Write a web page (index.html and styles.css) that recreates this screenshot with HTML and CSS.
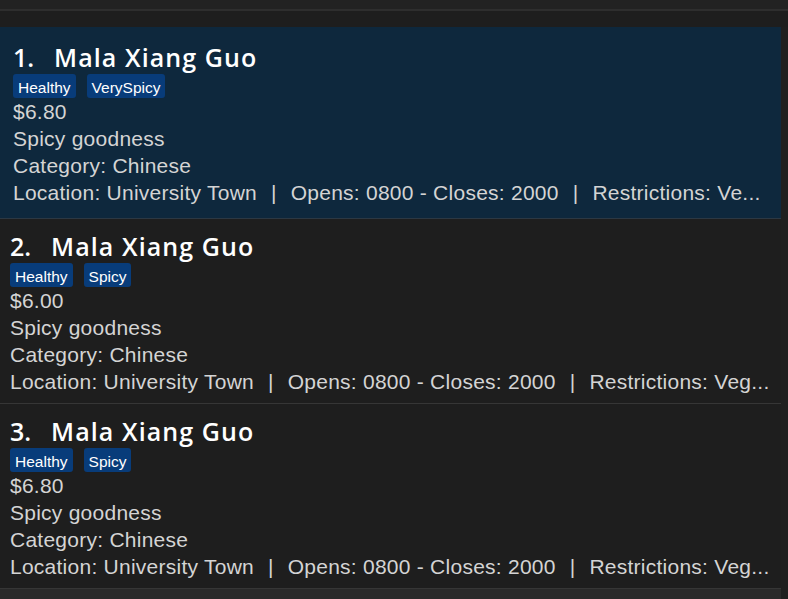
FILE: index.html
```html
<!DOCTYPE html>
<html lang="en">
<head>
<meta charset="utf-8">
<title>Food list</title>
<link rel="stylesheet" href="styles.css">
</head>
<body>
<div class="app">
  <div class="topbar"></div>
  <div class="gap"></div>
  <div class="listwrap">
    <ul class="list">
      <li class="cell selected">
        <div class="title"><span class="idx">1.</span>Mala Xiang Guo</div>
        <div class="tags"><span class="tag">Healthy</span><span class="tag">VerySpicy</span></div>
        <div class="line">$6.80</div>
        <div class="line">Spicy goodness</div>
        <div class="line">Category: Chinese</div>
        <div class="line">Location: University Town<span class="sep">|</span>Opens: 0800 - Closes: 2000<span class="sep">|</span>Restrictions: Ve...</div>
      </li>
      <li class="cell">
        <div class="title"><span class="idx">2.</span>Mala Xiang Guo</div>
        <div class="tags"><span class="tag">Healthy</span><span class="tag">Spicy</span></div>
        <div class="line">$6.00</div>
        <div class="line">Spicy goodness</div>
        <div class="line">Category: Chinese</div>
        <div class="line">Location: University Town<span class="sep">|</span>Opens: 0800 - Closes: 2000<span class="sep">|</span>Restrictions: Veg...</div>
      </li>
      <li class="cell">
        <div class="title"><span class="idx">3.</span>Mala Xiang Guo</div>
        <div class="tags"><span class="tag">Healthy</span><span class="tag">Spicy</span></div>
        <div class="line">$6.80</div>
        <div class="line">Spicy goodness</div>
        <div class="line">Category: Chinese</div>
        <div class="line">Location: University Town<span class="sep">|</span>Opens: 0800 - Closes: 2000<span class="sep">|</span>Restrictions: Veg...</div>
      </li>
      <li class="cell partial"></li>
    </ul>
    <div class="scrollbar"></div>
  </div>
</div>
</body>
</html>
```
FILE: styles.css
```css
html, body {
  margin: 0;
  padding: 0;
  background: #1e1e1e;
  overflow: hidden;
}
.app {
  width: 788px;
  height: 599px;
  display: flex;
  flex-direction: column;
  overflow: hidden;
  font-family: "Liberation Sans", Arial, sans-serif;
}
.topbar {
  height: 9px;
  background: #222222;
  border-bottom: 2px solid #2e2e2e;
  flex: none;
}
.gap {
  height: 16px;
  background: #1e1e1e;
  flex: none;
}
.listwrap {
  flex: 1;
  display: flex;
  min-height: 0;
}
.list {
  list-style: none;
  margin: 0;
  padding: 0;
  width: 781px;
  flex: none;
  background: #1e1e1e;
}
.scrollbar {
  flex: 1;
  background: #1f1f1f;
}
.cell {
  padding: 12px 10px 8px 10px;
  border-bottom: 1px solid #363636;
  color: #d4d4d4;
  overflow: hidden;
}
.cell.selected {
  background: #0e283d;
  padding: 15px 10px 12px 13px;
  border-bottom-color: #2c3843;
}
.cell.partial {
  background: #2a2a2a;
  height: 20px;
  padding: 0;
  border: none;
}
.title {
  font-family: "Open Sans", sans-serif;
  font-weight: 600;
  font-size: 25px;
  line-height: 30px;
  letter-spacing: 1.1px;
  color: #ffffff;
  white-space: nowrap;
}
.idx {
  display: inline-block;
  width: 41px;
  letter-spacing: 0;
}
.tags {
  margin-top: 2px;
  display: flex;
  gap: 11px;
  height: 24px;
}
.tag {
  background: #083c7a;
  color: #ffffff;
  font-size: 15.5px;
  line-height: 21px;
  padding: 3px 5px 0 5px;
  border-radius: 3px;
}
.line {
  font-size: 21px;
  line-height: 27px;
  letter-spacing: 0.25px;
  white-space: nowrap;
  overflow: hidden;
}
.sep {
  padding: 0 14px;
}
```
